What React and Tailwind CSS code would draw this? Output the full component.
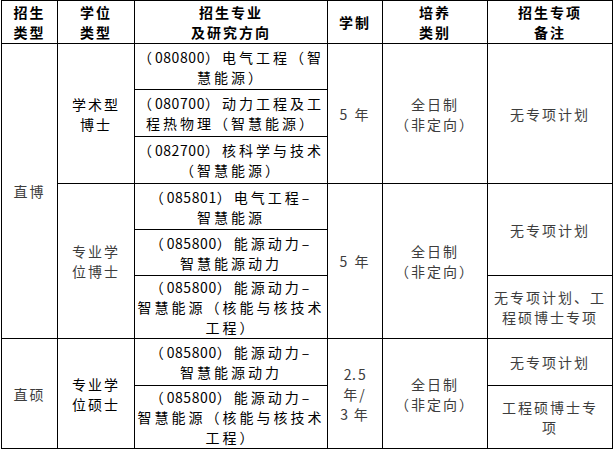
import React from "react";

const dim = "text-[#3d3d3d]";

function Td({ children, rowSpan, className = "" }) {
  return (
    <td
      rowSpan={rowSpan}
      className={`border border-black p-0 text-center align-middle whitespace-nowrap leading-[20px] ${className}`}
    >
      {children}
    </td>
  );
}

function Lines({ text }) {
  const parts = text.split("|");
  return parts.map((p, i) => (
    <React.Fragment key={i}>
      {p.split(/(\d+)/).map((seg, j) =>
        /^\d+$/.test(seg) ? (
          <span key={j} className="tracking-[0.6px]">{seg}</span>
        ) : (
          seg
        )
      )}
      {i < parts.length - 1 && <br />}
    </React.Fragment>
  ));
}

export default function App() {
  const headers = ["招生|类型", "学位|类型", "招生专业|及研究方向", "学制", "培养|类别", "招生专项|备注"];
  const major = "tracking-[3px]";

  return (
    <div className="w-[613px] h-[450px] bg-white pl-[1px]" style={{ fontFamily: '"Noto Sans CJK SC", "Noto Sans", sans-serif' }}>
      <table className="border-collapse table-fixed text-[14px] tracking-[2px] text-black">
        <colgroup>
          <col className="w-[56px]" />
          <col className="w-[77px]" />
          <col className="w-[193px]" />
          <col className="w-[55px]" />
          <col className="w-[105px]" />
          <col className="w-[125px]" />
        </colgroup>
        <tbody>
          <tr className="h-[43px]">
            {headers.map((h) => (
              <td key={h} className="border border-black p-0 text-center align-middle font-bold leading-[20px] whitespace-nowrap">
                <Lines text={h} />
              </td>
            ))}
          </tr>

          <tr className="h-[46px]">
            <Td rowSpan={6} className={dim}>直博</Td>
            <Td rowSpan={3}><Lines text="学术型|博士" /></Td>
            <Td className={major}><Lines text="（080800）电气工程（智|慧能源）" /></Td>
            <Td rowSpan={3} className={dim}>5 年</Td>
            <Td rowSpan={3} className={dim}><Lines text="全日制|（非定向）" /></Td>
            <Td rowSpan={3} className={dim}>无专项计划</Td>
          </tr>
          <tr className="h-[47px]">
            <Td className={major}><Lines text="（080700）动力工程及工|程热物理（智慧能源）" /></Td>
          </tr>
          <tr className="h-[47px]">
            <Td className={major}><Lines text="（082700）核科学与技术|（智慧能源）" /></Td>
          </tr>

          <tr className="h-[46px]">
            <Td rowSpan={3} className={dim}><Lines text="专业学|位博士" /></Td>
            <Td className={major}><Lines text="（085801）电气工程–|智慧能源" /></Td>
            <Td rowSpan={3} className={dim}>5 年</Td>
            <Td rowSpan={3} className={dim}><Lines text="全日制|（非定向）" /></Td>
            <Td rowSpan={2} className={dim}>无专项计划</Td>
          </tr>
          <tr className="h-[46px]">
            <Td className={major}><Lines text="（085800）能源动力–|智慧能源动力" /></Td>
          </tr>
          <tr className="h-[63px]">
            <Td className={major}><Lines text="（085800）能源动力–|智慧能源（核能与核技术|工程）" /></Td>
            <Td className={dim}><Lines text="无专项计划、工|程硕博士专项" /></Td>
          </tr>

          <tr className="h-[47px]">
            <Td rowSpan={2} className={dim}>直硕</Td>
            <Td rowSpan={2}><Lines text="专业学|位硕士" /></Td>
            <Td className={major}><Lines text="（085800）能源动力–|智慧能源动力" /></Td>
            <Td rowSpan={2} className={dim}><Lines text="2.5|年/|3 年" /></Td>
            <Td rowSpan={2} className={dim}><Lines text="全日制|（非定向）" /></Td>
            <Td className={dim}>无专项计划</Td>
          </tr>
          <tr className="h-[63px]">
            <Td className={major}><Lines text="（085800）能源动力–|智慧能源（核能与核技术|工程）" /></Td>
            <Td className={dim}><Lines text="工程硕博士专|项" /></Td>
          </tr>
        </tbody>
      </table>
    </div>
  );
}
